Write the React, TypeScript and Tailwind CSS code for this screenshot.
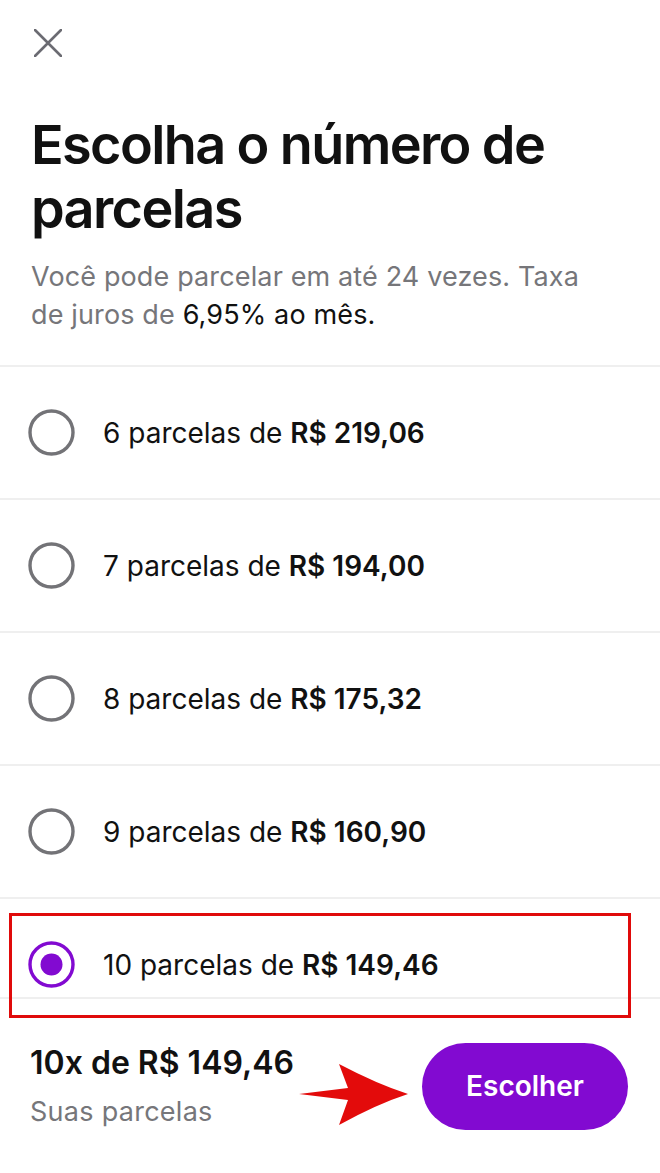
const options = [
  { n: 6, value: "R$ 219,06" },
  { n: 7, value: "R$ 194,00" },
  { n: 8, value: "R$ 175,32" },
  { n: 9, value: "R$ 160,90" },
  { n: 10, value: "R$ 149,46" },
];

const Radio = ({ checked }: { checked: boolean }) => (
  <svg width="47" height="47" viewBox="0 0 47 47" className="shrink-0">
    <circle
      cx="23.5"
      cy="23.5"
      r="21.5"
      fill="none"
      stroke={checked ? "#820ad1" : "#737377"}
      strokeWidth="3.4"
    />
    {checked && <circle cx="23.5" cy="23.5" r="11" fill="#820ad1" />}
  </svg>
);

export default function App() {
  const selected = 10;

  return (
    <div className="relative flex h-[1173px] w-[660px] flex-col overflow-hidden bg-white font-['Inter',sans-serif] text-[#111111]">
      {/* Header */}
      <div className="pl-[34px] pr-[30px] pt-[29px] pb-[31px]">
        <svg width="28" height="28" viewBox="0 0 28 28">
          <path d="M1 1L27 27M27 1L1 27" stroke="#6b6b72" strokeWidth="2.6" strokeLinecap="round" />
        </svg>
        <h1 className="-ml-[3px] mt-[56px] text-[54px] font-semibold leading-[64px] tracking-[-0.03em]">
          Escolha o número de parcelas
        </h1>
        <p className="-ml-[3px] mt-[17px] max-w-[570px] text-[27px] leading-[38px] tracking-[0.005em] text-[#76767a]">
          Você pode parcelar em até 24 vezes. Taxa de juros de{" "}
          <span className="text-[#111111]">6,95% ao mês.</span>
        </p>
      </div>

      {/* Options list */}
      <div className="flex-1 overflow-hidden border-t-2 border-[#efefef]">
        {options.map((o) => (
          <div
            key={o.n}
            className="flex h-[133px] items-center gap-[28px] border-b-2 border-[#efefef] pl-[28px]"
          >
            <Radio checked={o.n === selected} />
            <span className="text-[28px]">
              {o.n} parcelas de <span className="font-semibold">{o.value}</span>
            </span>
          </div>
        ))}
      </div>

      {/* Footer */}
      <div className="relative flex h-[176px] items-center justify-between border-t-2 border-[#efefef] pl-[30px] pr-[32px]">
        <div className="flex flex-col">
          <span className="text-[32px] font-semibold leading-[38px]">
            10x de R$ 149,46
          </span>
          <span className="mt-[13px] text-[27px] leading-[34px] tracking-[0.01em] text-[#76767a]">
            Suas parcelas
          </span>
        </div>
        <button className="h-[87px] w-[206px] rounded-full bg-[#820ad1] text-[28px] font-semibold text-white">
          Escolher
        </button>

        {/* annotation arrow */}
        <svg
          width="110"
          height="61"
          viewBox="0 0 110 61"
          className="absolute left-[299px] top-[65px]"
        >
          <path
            d="M0 30 L49 24 L40 0 Q78 20 109 30 Q78 40 40 61 L49 36 Z"
            fill="#e30b0b"
          />
        </svg>
      </div>

      {/* annotation box around selected row */}
      <div className="pointer-events-none absolute left-[9px] top-[913px] h-[105px] w-[622px] border-[3px] border-[#e00a0a]" />
    </div>
  );
}
